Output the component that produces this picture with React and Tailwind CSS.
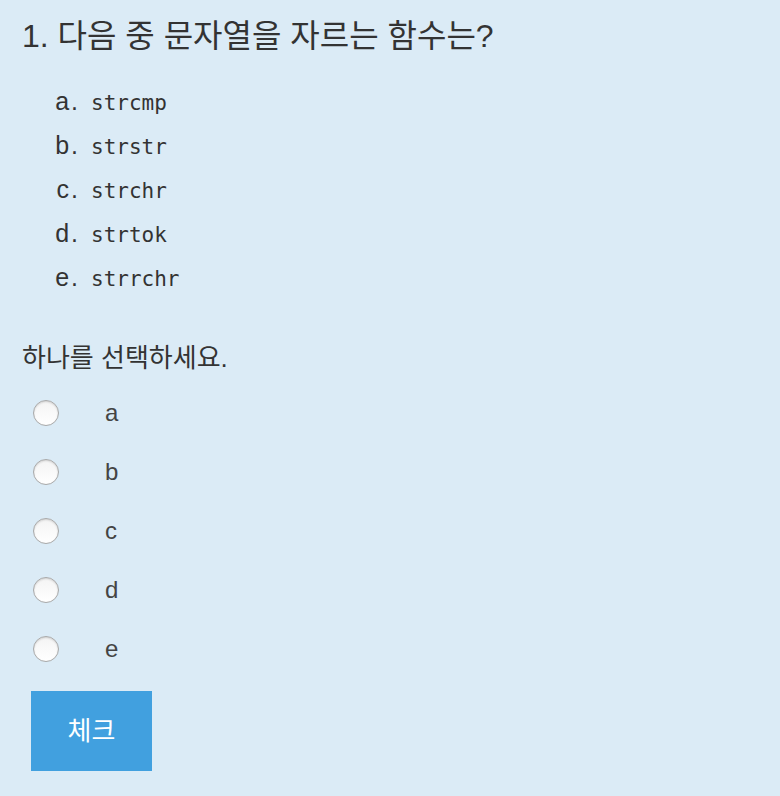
const options = ['strcmp', 'strstr', 'strchr', 'strtok', 'strrchr'];
const letters = ['a', 'b', 'c', 'd', 'e'];

function Radio() {
    return (
        <span className="block w-[26px] h-[26px] rounded-full border border-[#a9a9a9] bg-gradient-to-b from-[#f4f4f4] to-white shadow-[inset_0_1px_2px_rgba(0,0,0,0.15)]" />
    );
}

export default function App() {
    return (
        <div
            className="w-[780px] h-[796px] bg-[#dbebf6] text-[#333] px-[22px] pt-[14px]"
            style={{ fontFamily: '"Liberation Sans", "Noto Sans CJK KR", sans-serif' }}
        >
            <h1 className="text-[32px] leading-[44px]">1. 다음 중 문자열을 자르는 함수는?</h1>

            <ol className="mt-[21px]">
                {options.map((opt, i) => (
                    <li key={opt} className="h-[44px] leading-[44px] whitespace-nowrap">
                        <span className="inline-block w-[56px] text-right text-[25px]">
                            {letters[i]}<span className="ml-[2px]">.</span>
                        </span>
                        <span
                            className="ml-[13px] text-[21px]"
                            style={{ fontFamily: '"DejaVu Sans Mono", monospace' }}
                        >
                            {opt}
                        </span>
                    </li>
                ))}
            </ol>

            <p className="mt-[42px] text-[26px] leading-[34px]">하나를 선택하세요.</p>

            <div className="mt-[8px] flex flex-col">
                {letters.map(l => (
                    <label key={l} className="flex items-center h-[59px] pl-[11px]">
                        <Radio />
                        <span className="ml-[46px] text-[24px] text-[#444]">{l}</span>
                    </label>
                ))}
            </div>

            <button className="mt-[13px] ml-[9px] w-[121px] h-[80px] bg-[#41a0df] text-white text-[26px]">
                체크
            </button>
        </div>
    );
}
